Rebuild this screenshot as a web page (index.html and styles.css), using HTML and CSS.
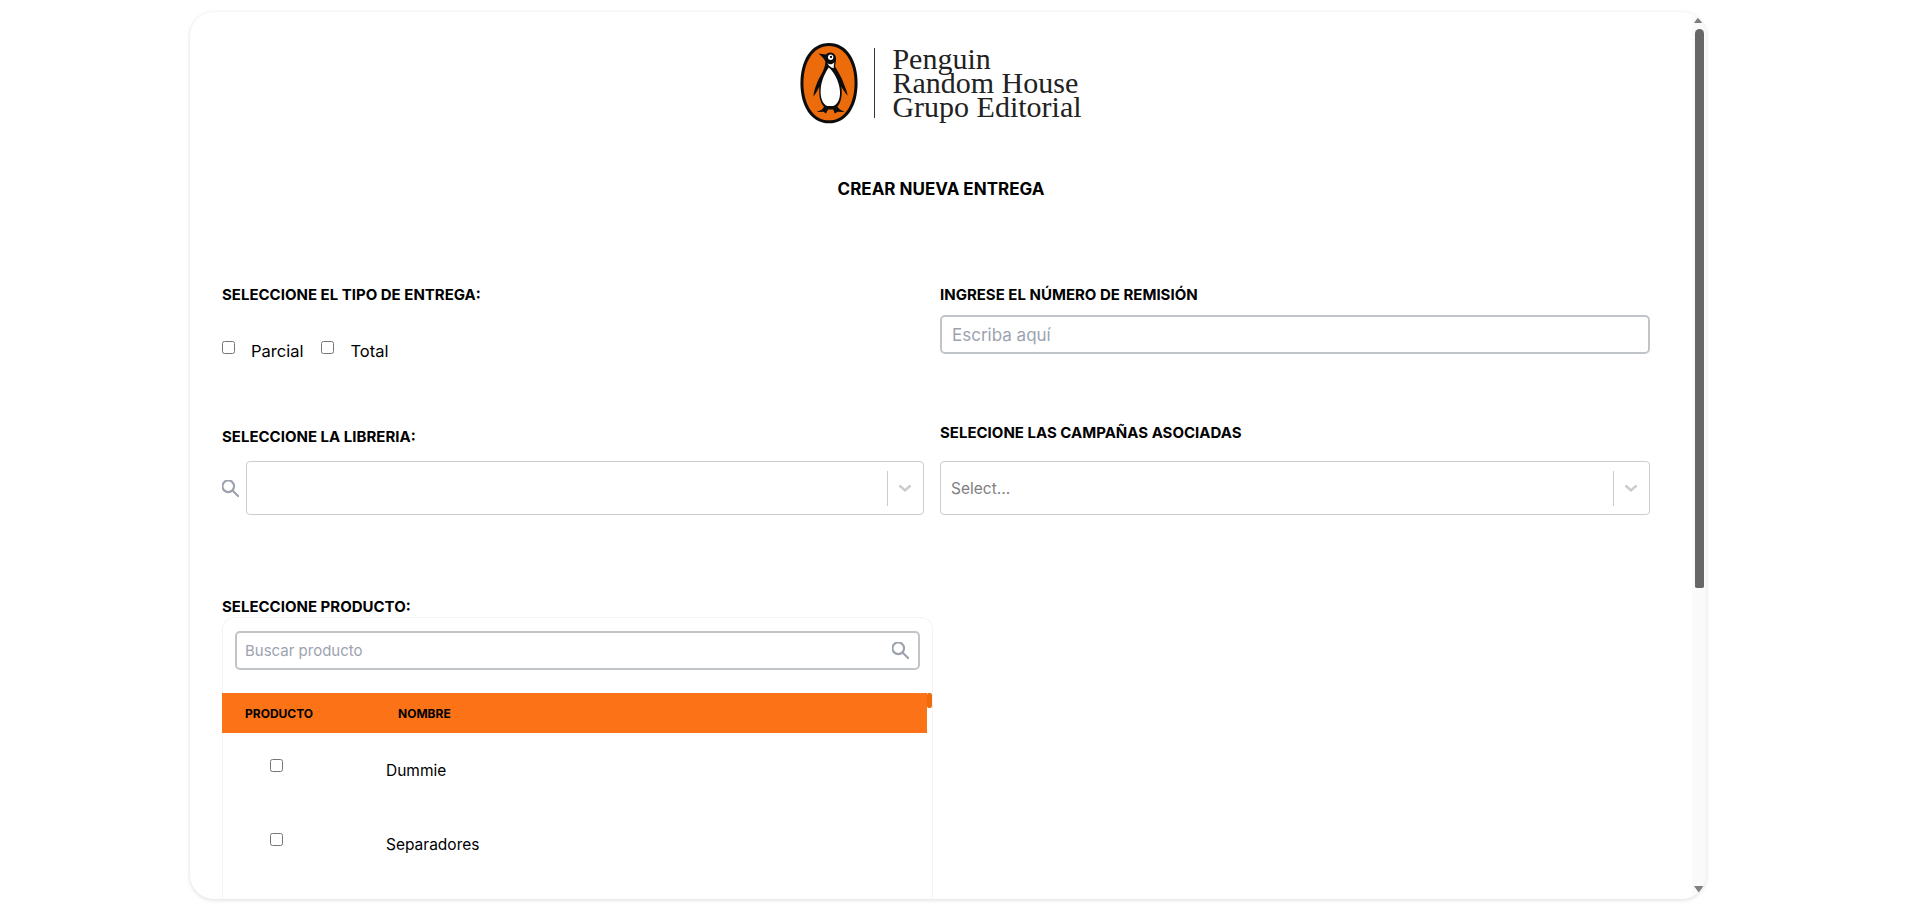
FILE: index.html
```html
<!DOCTYPE html>
<html lang="es">
<head>
  <meta charset="UTF-8" />
  <meta name="viewport" content="width=device-width, initial-scale=1.0"/>
  <title>Crear nueva entrega</title>
  <link rel="stylesheet" href="styles.css">
</head>
<body>
  <div class="card">
    <main class="content">
      <div class="logo">
        <svg class="logo-mark" viewBox="0 0 174 256" width="58" height="85">
          <path fill="#0c0c0c" d="M87 6 C142 6 173 60 173 127 C173 194 142 248 87 248 C32 248 1 194 1 127 C1 60 32 6 87 6 Z"/>
          <path fill="#ec6c0c" d="M87 15 C136 15 164 66 164 127 C164 188 136 239 87 239 C38 239 10 188 10 127 C10 66 38 15 87 15 Z"/>
          <path fill="#0c0c0c" d="M55 38 L78 41 C84 33 100 32 106 44 C112 58 104 68 106 78 C116 95 126 110 134 135 C138 145 142 155 143 165 C135 155 128 145 124 138 C128 160 124 185 112 198 L120 206 L134 214 L114 213 L104 218 L100 206 L84 206 L78 218 L70 213 L50 214 L66 206 L72 198 C60 185 56 165 58 138 C52 150 46 160 40 168 C42 145 52 120 64 100 C72 85 76 75 76 62 C70 50 62 44 55 38 Z"/>
          <path fill="#fff" d="M86 80 C100 90 118 120 120 150 C122 175 112 192 100 196 L82 196 C68 190 60 170 62 145 C64 118 76 95 86 80 Z"/>
          <path fill="#fff" d="M82 66 C88 72 96 72 103 64 C102 72 100 78 102 82 C96 80 88 78 82 66 Z"/>
          <circle cx="92" cy="49" r="8" fill="#fff"/>
          <circle cx="93" cy="48" r="3.5" fill="#0c0c0c"/>
        </svg>
        <span class="logo-line"></span>
        <div class="logo-text">
          <div>Penguin</div>
          <div>Random House</div>
          <div>Grupo Editorial</div>
        </div>
      </div>

      <h1 class="title">CREAR NUEVA ENTREGA</h1>

      <div class="form-grid">
        <section class="field">
          <label class="field-label">SELECCIONE EL TIPO DE ENTREGA:</label>
          <div class="check-row">
            <input type="checkbox" id="parcial">
            <label class="check-text" for="parcial">Parcial</label>
            <input type="checkbox" id="total">
            <label class="check-text" for="total">Total</label>
          </div>
        </section>
        <section class="field">
          <label class="field-label">INGRESE EL NÚMERO DE REMISIÓN</label>
          <input class="text-input remision-input" type="text" placeholder="Escriba aquí">
        </section>

        <section class="field field-low">
          <label class="field-label">SELECCIONE LA LIBRERIA:</label>
          <div class="select-row">
            <svg class="search-icon" viewBox="3 3 19 19" width="17" height="17">
              <circle cx="10" cy="10" r="6.5"/>
              <path d="M15 15 L21 21"/>
            </svg>
            <div class="select-box">
              <span class="select-value"></span>
              <span class="select-sep"></span>
              <svg class="chevron" viewBox="0 0 20 20" width="20" height="20">
                <path d="M4.5 7.5 L10 12.5 L15.5 7.5"/>
              </svg>
            </div>
          </div>
        </section>
        <section class="field">
          <label class="field-label">SELECIONE LAS CAMPAÑAS ASOCIADAS</label>
          <div class="select-box">
            <span class="select-value">Select...</span>
            <span class="select-sep"></span>
            <svg class="chevron" viewBox="0 0 20 20" width="20" height="20">
              <path d="M4.5 7.5 L10 12.5 L15.5 7.5"/>
            </svg>
          </div>
        </section>
      </div>

      <section class="products">
        <label class="field-label">SELECCIONE PRODUCTO:</label>
        <div class="product-panel">
          <div class="product-search">
            <input class="text-input" type="text" placeholder="Buscar producto">
            <svg class="search-icon" viewBox="3 3 19 19" width="17" height="17">
              <circle cx="10" cy="10" r="6.5"/>
              <path d="M15 15 L21 21"/>
            </svg>
          </div>
          <div class="table-head">
            <div class="head-row">
              <span>PRODUCTO</span>
              <span>NOMBRE</span>
            </div>
            <span class="table-thumb"></span>
          </div>
          <div class="table-row">
            <input type="checkbox">
            <span>Dummie</span>
          </div>
          <div class="table-row">
            <input type="checkbox">
            <span>Separadores</span>
          </div>
        </div>
      </section>
    </main>

    <div class="scrollbar">
      <span class="arrow-up"></span>
      <span class="thumb"></span>
      <span class="arrow-down"></span>
    </div>
  </div>
</body>
</html>
```

FILE: styles.css
```css
html, body { height: 100%; }
body { margin: 0; padding: 12px 201px 0 190px; background: #fff; overflow: hidden; box-sizing: border-box; font-family: Inter, "Liberation Sans", sans-serif; color: #000; }

.card { display: flex; height: 887px; background: #fff; border-radius: 24px; box-shadow: 0 1px 4px rgba(0, 0, 0, 0.14); overflow: hidden; }
.content { flex: 1; min-width: 0; padding: 31px 42px 0 32px; overflow: hidden; }

.logo { display: flex; align-items: center; justify-content: center; height: 80px; padding-left: 10px; }
.logo-mark { flex: none; }
.logo-line { width: 1px; height: 70px; margin: 0 17px 0 16px; background: #333; }
.logo-text { margin-top: -1px; font-family: "Liberation Serif", serif; font-size: 30px; line-height: 24px; color: #222; white-space: nowrap; }

.title { margin: 54px 0 0; padding-left: 10px; font-size: 17px; line-height: 24px; font-weight: 700; text-align: center; }

.form-grid { display: grid; grid-template-columns: 710px 710px; column-gap: 8px; row-gap: 60px; margin-top: 84px; }
.field-label { display: block; font-size: 15px; line-height: 20px; font-weight: 700; white-space: nowrap; }
.field-low { padding-top: 4px; }

.check-row { display: flex; align-items: center; margin-top: 34px; height: 24px; font-size: 16.5px; }
.check-row input { width: 13px; height: 13px; margin: 0 16px 7px 0; flex: none; }
.check-text { margin-right: 18px; }

.text-input { display: block; width: 100%; height: 39px; box-sizing: border-box; padding: 0 8px; border: 2px solid #c1c4c9; border-radius: 5px; font-family: inherit; font-size: 15px; background: #fff; outline: none; }
.text-input::placeholder { color: #9ca3af; }
.field .text-input { margin-top: 10px; }
.remision-input { padding: 0 10px; font-size: 17px; }

.select-row { display: flex; align-items: center; gap: 7px; margin-top: 14px; margin-right: 8px; }
.search-icon { flex: none; fill: none; stroke: #9ca3af; stroke-width: 2.4; stroke-linecap: round; }
.select-box { flex: 1; display: flex; align-items: center; height: 54px; box-sizing: border-box; border: 1px solid #ccc; border-radius: 4px; background: #fff; }
.field > .select-box { margin-top: 18px; }
.select-value { flex: 1; padding-left: 10px; font-size: 15.5px; color: #808080; }
.select-sep { width: 1px; height: 35px; background: #ccc; }
.chevron { margin: 0 8px 0 7px; fill: none; stroke: #ccc; stroke-width: 2.4; }

.products { width: 711px; margin-top: 82px; }
.product-panel { border: 1px solid #f4f4f4; border-bottom: 0; border-radius: 12px 12px 0 0; box-sizing: border-box; height: 300px; }
.product-search { position: relative; padding: 13px 12px 0; }
.product-search .search-icon { position: absolute; right: 23px; top: 24px; }
.table-head { display: flex; margin-top: 23px; }
.head-row { flex: 1; display: grid; grid-template-columns: 153px 1fr; align-items: center; height: 40px; padding-left: 23px; background: #fb7316; font-size: 12px; font-weight: 700; margin-left: -1px; }
.table-thumb { width: 5px; height: 15px; background: #ef6a0a; border-radius: 2px; }
.table-row { display: grid; grid-template-columns: 116px 1fr; align-items: center; height: 74px; padding-left: 47px; font-size: 15.5px; }
.table-row input { width: 13px; height: 13px; margin: 0 0 10px; }

.scrollbar { flex: none; width: 14px; display: flex; flex-direction: column; align-items: center; background: #fafafa; padding: 4px 0 4px; box-sizing: border-box; }
.arrow-up { width: 0; height: 0; border-left: 5px solid transparent; border-right: 5px solid transparent; border-bottom: 7px solid #7f7f7f; }
.arrow-down { width: 0; height: 0; margin-top: auto; margin-bottom: 2px; border-left: 5px solid transparent; border-right: 5px solid transparent; border-top: 7px solid #7f7f7f; }
.thumb { width: 9px; height: 559px; margin-top: 6px; border-radius: 5px 5px 2px 2px; background: #666; }
```
